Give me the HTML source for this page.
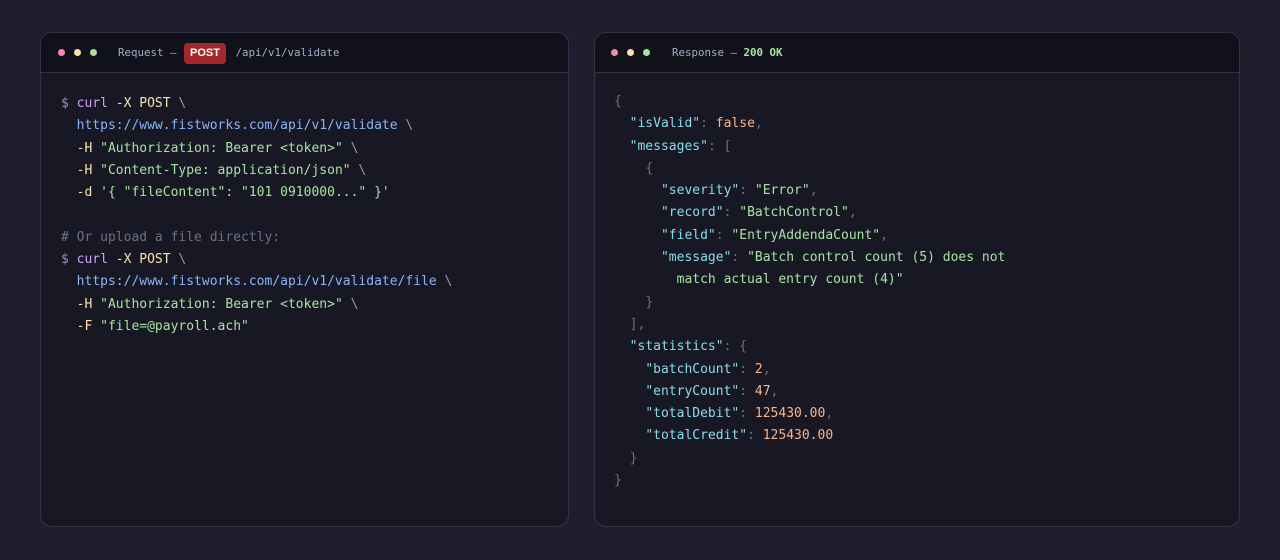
<!DOCTYPE html><html><head><style>
body{margin:0;width:1280px;height:560px;background:#1e1e2e;position:relative;overflow:hidden;font-family:"DejaVu Sans Mono","Liberation Mono",monospace}
.p{position:absolute;top:32px;height:495px;background:#181825;border:1px solid #313244;border-radius:12px;overflow:hidden;box-sizing:border-box}
.h{height:40px;background:#11111b;border-bottom:1px solid #313244;position:relative;font-size:10.8px;color:#a6adc8;box-sizing:border-box}
.d{position:absolute;top:16px;width:7px;height:7px;border-radius:50%}
.t{position:absolute;top:0;line-height:39px;white-space:pre}
pre{margin:0;position:absolute;font-family:inherit;font-size:13px;line-height:22.3px;color:#cdd6f4}
.g{color:#9399b2}.m{color:#cba6f7}.y{color:#f9e2af}.b{color:#89b4fa}.s{color:#a6e3a1}.c{color:#6c7086}.k{color:#89dceb}.o{color:#fab387}.pu{color:#6c7086}
.post{display:inline-block;background:#a3282b;color:#fff;font-family:"Liberation Sans",sans-serif;font-weight:bold;font-size:11px;padding:0 6px;line-height:21px;border-radius:4px;margin:0 3px 0 1px}
</style></head><body>
<div class="p" style="left:40px;width:529px">
<div class="h"><div class="d" style="left:17px;background:#f38ba8"></div><div class="d" style="left:33px;background:#f9e2af"></div><div class="d" style="left:49px;background:#a6e3a1"></div>
<div class="t" style="left:77px">Request — <span class="post">POST</span> /api/v1/validate</div></div>
<pre style="left:20px;top:60px"><span class="g">$</span> <span class="m">curl</span> <span class="y">-X POST</span> <span class="g">\</span>
  <span class="b">https://www.fistworks.com/api/v1/validate</span> <span class="g">\</span>
  <span class="y">-H</span> <span class="s">"Authorization: Bearer &lt;token&gt;"</span> <span class="g">\</span>
  <span class="y">-H</span> <span class="s">"Content-Type: application/json"</span> <span class="g">\</span>
  <span class="y">-d</span> <span class="s">'{ "fileContent": "101 0910000..." }'</span>

<span class="c"># Or upload a file directly:</span>
<span class="g">$</span> <span class="m">curl</span> <span class="y">-X POST</span> <span class="g">\</span>
  <span class="b">https://www.fistworks.com/api/v1/validate/file</span> <span class="g">\</span>
  <span class="y">-H</span> <span class="s">"Authorization: Bearer &lt;token&gt;"</span> <span class="g">\</span>
  <span class="y">-F</span> <span class="s">"file=@payroll.ach"</span></pre>
</div>
<div class="p" style="left:594px;width:646px">
<div class="h"><div class="d" style="left:16px;background:#f38ba8"></div><div class="d" style="left:32px;background:#f9e2af"></div><div class="d" style="left:48px;background:#a6e3a1"></div>
<div class="t" style="left:77px">Response — <b class="s">200 OK</b></div></div>
<pre style="left:19px;top:58px"><span class="pu">{</span>
  <span class="k">"isValid"</span><span class="pu">:</span> <span class="o">false</span><span class="pu">,</span>
  <span class="k">"messages"</span><span class="pu">: [</span>
    <span class="pu">{</span>
      <span class="k">"severity"</span><span class="pu">:</span> <span class="s">"Error"</span><span class="pu">,</span>
      <span class="k">"record"</span><span class="pu">:</span> <span class="s">"BatchControl"</span><span class="pu">,</span>
      <span class="k">"field"</span><span class="pu">:</span> <span class="s">"EntryAddendaCount"</span><span class="pu">,</span>
      <span class="k">"message"</span><span class="pu">:</span> <span class="s">"Batch control count (5) does not</span>
<span class="s">        match actual entry count (4)"</span>
    <span class="pu">}</span>
  <span class="pu">],</span>
  <span class="k">"statistics"</span><span class="pu">: {</span>
    <span class="k">"batchCount"</span><span class="pu">:</span> <span class="o">2</span><span class="pu">,</span>
    <span class="k">"entryCount"</span><span class="pu">:</span> <span class="o">47</span><span class="pu">,</span>
    <span class="k">"totalDebit"</span><span class="pu">:</span> <span class="o">125430.00</span><span class="pu">,</span>
    <span class="k">"totalCredit"</span><span class="pu">:</span> <span class="o">125430.00</span>
  <span class="pu">}</span>
<span class="pu">}</span></pre>
</div>
</body></html>
